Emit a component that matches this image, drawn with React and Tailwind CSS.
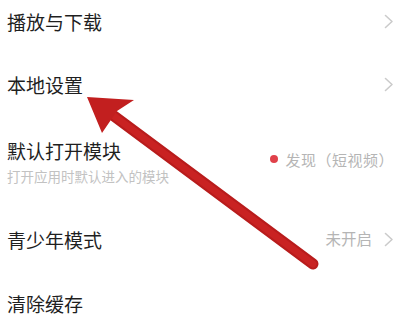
const font = { fontFamily: '"Noto Sans CJK SC", "Noto Sans", sans-serif' };

const Chevron = () => (
  <svg width="10" height="15" viewBox="0 0 10 15" className="text-[#cbcbcb]">
    <polyline points="1.5,1.5 8,7.5 1.5,13.5" fill="none" stroke="currentColor" strokeWidth="1.6" strokeLinecap="round" strokeLinejoin="round" />
  </svg>
);

const Row = ({ h, title, children }) => (
  <div className={`flex items-center justify-between ${h}`}>
    <div className="text-[19px] leading-none text-[#1f1f1f]">{title}</div>
    <div className="flex items-center gap-[12px]">{children}</div>
  </div>
);

export default function App() {
  return (
    <div className="relative w-[403px] h-[322px] overflow-hidden bg-white" style={font}>
      <div className="flex flex-col pl-[7px] pr-[9px] -mt-[10px]">
        <Row h="h-[62px]" title="播放与下载">
          <Chevron />
        </Row>
        <Row h="h-[64px]" title="本地设置">
          <Chevron />
        </Row>
        <div className="flex items-center justify-between h-[92px]">
          <div className="flex flex-col gap-[10px]">
            <div className="text-[19px] leading-none text-[#1f1f1f]">默认打开模块</div>
            <div className="text-[13.5px] leading-none text-[#c2c2c2]">打开应用时默认进入的模块</div>
          </div>
          <div className="flex items-center gap-[7px] pb-[6px]">
            <span className="w-[8px] h-[8px] rounded-full bg-[#e0414a]" />
            <span className="text-[15px] leading-none text-[#b5b5b5] tracking-[0.5px]">发现（短视频）</span>
          </div>
        </div>
        <Row h="h-[62px]" title="青少年模式">
          <span className="text-[15.5px] leading-none text-[#b5b5b5]">未开启</span>
          <Chevron />
        </Row>
        <Row h="h-[66px]" title="清除缓存" />
      </div>

      <svg className="absolute inset-0 pointer-events-none" width="403" height="322" viewBox="0 0 403 322">
        <line x1="114" y1="116" x2="313" y2="264" stroke="#b81c1c" strokeWidth="11" strokeLinecap="round" />
        <line x1="114" y1="116" x2="313" y2="264" stroke="#c92222" strokeWidth="7" strokeLinecap="round" />
        <polygon points="87,97 134,100 117,111 102,133" fill="#c21f1f" />
      </svg>
    </div>
  );
}
